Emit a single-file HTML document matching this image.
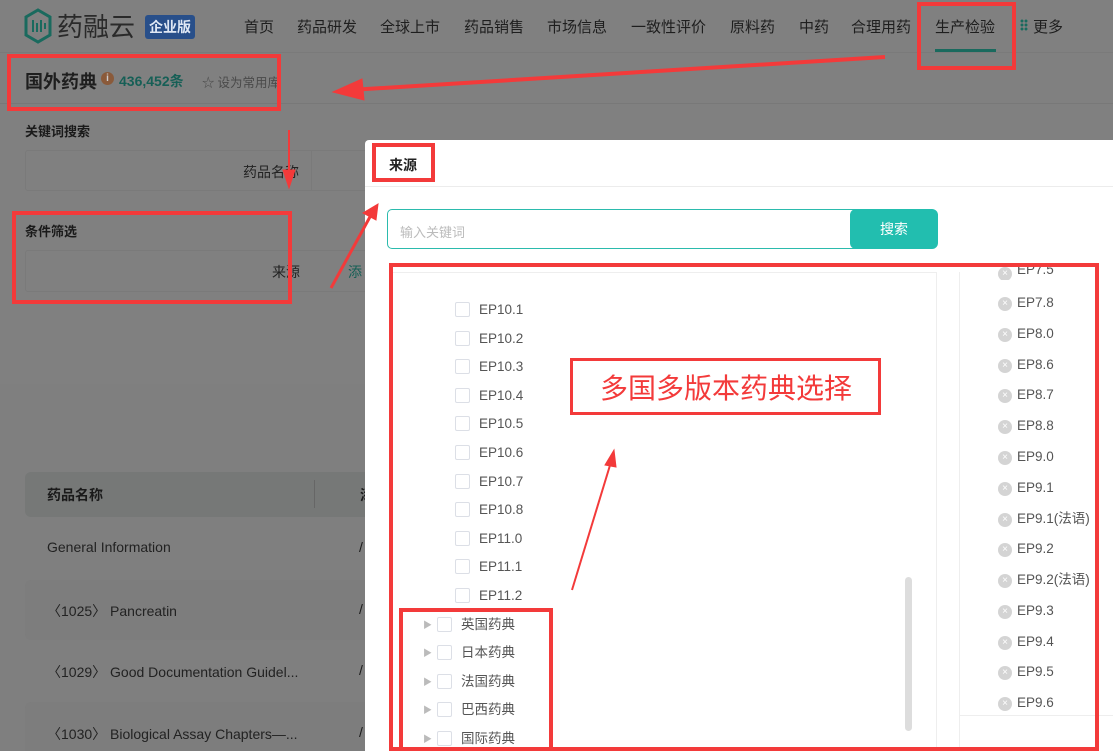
<!DOCTYPE html>
<html style="overflow:hidden;width:1113px;height:751px"><head><meta charset="utf-8"><style>
*{margin:0;padding:0;box-sizing:border-box}
body{width:1113px;height:751px;overflow:hidden;background:#808080;font-family:"Liberation Sans","Noto Sans CJK SC",sans-serif;position:relative;color:#1a1a1a}
.a{position:absolute;white-space:nowrap}
.nav{font-size:15px;color:#1e1e1e;top:16px}
.rb{position:absolute;border:4px solid #f33a3a}
.cb{position:absolute;width:15px;height:15px;border:1px solid #dcdfe6;border-radius:2px;background:#fff}
.lt{position:absolute;font-size:13.5px;color:#555;line-height:16px;white-space:nowrap}
.x{position:absolute;width:14px;height:14px;border-radius:50%;background:#d4d4d4;color:#fff;font-size:10px;line-height:14px;text-align:center}
</style></head><body>
<div class="a" style="left:0;top:0;width:1113px;height:53px;border-bottom:1px solid #7a7a7a"></div>
<svg class="a" style="left:23px;top:8px" width="30" height="36" viewBox="0 0 30 36"><path d="M15 2 L27 9 L27 27 L15 34 L3 27 L3 9 Z" fill="none" stroke="#1a6a5e" stroke-width="3"/><path d="M10 12v12M14 15v9M18 12v12M22 15v6" stroke="#1a6a5e" stroke-width="2"/></svg>
<div class="a" style="left:57px;top:7px;font-size:26px;color:#2a2a2a">药融云</div>
<div class="a" style="left:145px;top:15px;background:#284f8a;color:#dfe8f5;font-size:14px;font-weight:bold;padding:2px 4px;border-radius:3px">企业版</div>
<div class="a nav" style="left:244px">首页</div>
<div class="a nav" style="left:297px">药品研发</div>
<div class="a nav" style="left:380px">全球上市</div>
<div class="a nav" style="left:464px">药品销售</div>
<div class="a nav" style="left:547px">市场信息</div>
<div class="a nav" style="left:631px">一致性评价</div>
<div class="a nav" style="left:730px">原料药</div>
<div class="a nav" style="left:799px">中药</div>
<div class="a nav" style="left:851px">合理用药</div>
<div class="a nav" style="left:935px">生产检验</div>
<div class="a" style="left:935px;top:49px;width:61px;height:3px;background:#1a6a5e"></div>
<div class="a" style="left:1020px;top:19px;width:8px;height:12px;background:radial-gradient(circle,#1a6a5e 1.3px,transparent 1.6px) 0 0/4px 4px"></div>
<div class="a nav" style="left:1033px">更多</div>
<div class="a" style="left:0;top:54px;width:1113px;height:50px;border-bottom:1px solid #787878"></div>
<div class="a" style="left:25px;top:68px;font-size:18px;font-weight:bold;color:#1e1e1e">国外药典</div>
<div class="a" style="left:101px;top:72px;width:13px;height:13px;border-radius:50%;background:#8a5a3a;color:#ccc;font-size:10px;text-align:center;line-height:13px;font-weight:bold">i</div>
<div class="a" style="left:119px;top:71px;font-size:14px;font-weight:bold;color:#165f56">436,452条</div>
<div class="a" style="left:202px;top:72px;font-size:12.5px;color:#4a4a4a">☆<span style="margin-left:3px">设为常用库</span></div>
<div class="a" style="left:25px;top:121px;font-size:13px;font-weight:bold">关键词搜索</div>
<div class="a" style="left:25px;top:150px;width:345px;height:41px;border:1px solid #7a7a7a;border-radius:3px"></div>
<div class="a" style="left:311px;top:150px;width:1px;height:41px;background:#7a7a7a"></div>
<div class="a" style="left:243px;top:162px;font-size:14px;color:#222">药品名称</div>
<div class="a" style="left:25px;top:221px;font-size:13px;font-weight:bold">条件筛选</div>
<div class="a" style="left:25px;top:250px;width:345px;height:42px;border:1px solid #7a7a7a;border-radius:3px"></div>
<div class="a" style="left:272px;top:262px;font-size:14px;color:#222">来源</div>
<div class="a" style="left:348px;top:262px;font-size:14px;color:#165f56">添</div>
<div class="a" style="left:0;top:384px;width:365px;height:367px;background:#7f7f7f"></div>
<div class="a" style="left:25px;top:472px;width:345px;height:45px;background:#767877;border-radius:6px 0 0 6px"></div>
<div class="a" style="left:47px;top:485px;font-size:14px;font-weight:bold">药品名称</div>
<div class="a" style="left:314px;top:480px;width:1px;height:28px;background:#666"></div>
<div class="a" style="left:360px;top:485px;font-size:14px;font-weight:bold">添</div>
<div class="a" style="left:25px;top:580px;width:345px;height:60px;background:#7d7d7d;border-radius:6px"></div>
<div class="a" style="left:25px;top:702px;width:345px;height:60px;background:#7d7d7d;border-radius:6px"></div>
<div class="a" style="left:47px;top:539px;font-size:14px;color:#222">General Information</div>
<div class="a" style="left:47px;top:601px;font-size:14px;color:#222">〈1025〉 Pancreatin</div>
<div class="a" style="left:47px;top:662px;font-size:14px;color:#222">〈1029〉 Good Documentation Guidel...</div>
<div class="a" style="left:47px;top:724px;font-size:14px;color:#222">〈1030〉 Biological Assay Chapters—...</div>
<div class="a" style="left:359px;top:539px;font-size:14px">/</div><div class="a" style="left:359px;top:601px;font-size:14px">/</div><div class="a" style="left:359px;top:662px;font-size:14px">/</div><div class="a" style="left:359px;top:724px;font-size:14px">/</div>
<div class="a" style="left:365px;top:140px;width:748px;height:611px;background:#fff;border-radius:4px 0 0 0"></div>
<div class="a" style="left:365px;top:186px;width:748px;height:1px;background:#ececec"></div>
<div class="a" style="left:389px;top:155px;font-size:14px;font-weight:bold;color:#222">来源</div>
<div class="a" style="left:387px;top:209px;width:470px;height:40px;border:1px solid #2bbbad;border-radius:5px 0 0 5px"></div>
<div class="a" style="left:400px;top:222px;font-size:13px;color:#bbb">输入关键词</div>
<div class="a" style="left:850px;top:209px;width:88px;height:40px;background:#22beaf;border-radius:6px;color:#fff;font-size:14px;text-align:center;line-height:40px">搜索</div>
<div class="a" style="left:391px;top:272px;width:546px;height:479px;border:1px solid #eee;border-bottom:none"></div>
<div class="a" style="left:959px;top:272px;width:154px;height:479px;border-left:1px solid #eee"></div>
<div class="a" style="left:959px;top:715px;width:154px;height:1px;background:#eee"></div>
<div class="a" style="left:905px;top:577px;width:7px;height:154px;background:#ddd;border-radius:4px"></div>
<div class="cb" style="left:455px;top:302px"></div><div class="lt" style="left:479px;top:302px">EP10.1</div>
<div class="cb" style="left:455px;top:331px"></div><div class="lt" style="left:479px;top:331px">EP10.2</div>
<div class="cb" style="left:455px;top:359px"></div><div class="lt" style="left:479px;top:359px">EP10.3</div>
<div class="cb" style="left:455px;top:388px"></div><div class="lt" style="left:479px;top:388px">EP10.4</div>
<div class="cb" style="left:455px;top:416px"></div><div class="lt" style="left:479px;top:416px">EP10.5</div>
<div class="cb" style="left:455px;top:445px"></div><div class="lt" style="left:479px;top:445px">EP10.6</div>
<div class="cb" style="left:455px;top:474px"></div><div class="lt" style="left:479px;top:474px">EP10.7</div>
<div class="cb" style="left:455px;top:502px"></div><div class="lt" style="left:479px;top:502px">EP10.8</div>
<div class="cb" style="left:455px;top:531px"></div><div class="lt" style="left:479px;top:531px">EP11.0</div>
<div class="cb" style="left:455px;top:559px"></div><div class="lt" style="left:479px;top:559px">EP11.1</div>
<div class="cb" style="left:455px;top:588px"></div><div class="lt" style="left:479px;top:588px">EP11.2</div>
<div class="lt" style="left:423px;top:617px;font-size:9px;color:#bbb">▶</div><div class="cb" style="left:437px;top:617px"></div><div class="lt" style="left:461px;top:617px">英国药典</div>
<div class="lt" style="left:423px;top:645px;font-size:9px;color:#bbb">▶</div><div class="cb" style="left:437px;top:645px"></div><div class="lt" style="left:461px;top:645px">日本药典</div>
<div class="lt" style="left:423px;top:674px;font-size:9px;color:#bbb">▶</div><div class="cb" style="left:437px;top:674px"></div><div class="lt" style="left:461px;top:674px">法国药典</div>
<div class="lt" style="left:423px;top:702px;font-size:9px;color:#bbb">▶</div><div class="cb" style="left:437px;top:702px"></div><div class="lt" style="left:461px;top:702px">巴西药典</div>
<div class="lt" style="left:423px;top:731px;font-size:9px;color:#bbb">▶</div><div class="cb" style="left:437px;top:731px"></div><div class="lt" style="left:461px;top:731px">国际药典</div>
<div class="a" style="left:960px;top:266px;width:140px;height:14px;overflow:hidden"><div class="x" style="left:38px;top:1px">×</div><div class="lt" style="left:57px;top:-4px">EP7.5</div></div>
<div class="x" style="left:998px;top:297px">×</div><div class="lt" style="left:1017px;top:295px">EP7.8</div>
<div class="x" style="left:998px;top:328px">×</div><div class="lt" style="left:1017px;top:326px">EP8.0</div>
<div class="x" style="left:998px;top:359px">×</div><div class="lt" style="left:1017px;top:357px">EP8.6</div>
<div class="x" style="left:998px;top:389px">×</div><div class="lt" style="left:1017px;top:387px">EP8.7</div>
<div class="x" style="left:998px;top:420px">×</div><div class="lt" style="left:1017px;top:418px">EP8.8</div>
<div class="x" style="left:998px;top:451px">×</div><div class="lt" style="left:1017px;top:449px">EP9.0</div>
<div class="x" style="left:998px;top:482px">×</div><div class="lt" style="left:1017px;top:480px">EP9.1</div>
<div class="x" style="left:998px;top:513px">×</div><div class="lt" style="left:1017px;top:511px">EP9.1(法语)</div>
<div class="x" style="left:998px;top:543px">×</div><div class="lt" style="left:1017px;top:541px">EP9.2</div>
<div class="x" style="left:998px;top:574px">×</div><div class="lt" style="left:1017px;top:572px">EP9.2(法语)</div>
<div class="x" style="left:998px;top:605px">×</div><div class="lt" style="left:1017px;top:603px">EP9.3</div>
<div class="x" style="left:998px;top:636px">×</div><div class="lt" style="left:1017px;top:634px">EP9.4</div>
<div class="x" style="left:998px;top:666px">×</div><div class="lt" style="left:1017px;top:664px">EP9.5</div>
<div class="x" style="left:998px;top:697px">×</div><div class="lt" style="left:1017px;top:695px">EP9.6</div>
<div class="rb" style="left:917px;top:2px;width:99px;height:68px"></div>
<div class="rb" style="left:7px;top:54px;width:274px;height:57px"></div>
<div class="rb" style="left:12px;top:211px;width:280px;height:93px"></div>
<div class="rb" style="left:372px;top:143px;width:63px;height:39px"></div>
<div class="rb" style="left:389px;top:263px;width:710px;height:488px"></div>
<div class="rb" style="left:399px;top:608px;width:154px;height:143px"></div>
<div class="rb" style="left:570px;top:358px;width:311px;height:57px;border-width:3px"></div>
<div class="a" style="left:600px;top:367px;font-size:28px;color:#f33a3a">多国多版本药典选择</div>
<svg class="a" style="left:0;top:0" width="1113" height="751">
<g fill="#f33a3a" stroke="#f33a3a">
<path d="M885 57 L350 90" stroke-width="4"/><path d="M333 92 L362 79 L364 100 Z"/>
<path d="M289 130 L289 175" stroke-width="2"/><path d="M289 188 L283 170 L295 170 Z"/>
<path d="M331 288 L371 215" stroke-width="3"/><path d="M378 204 L363 213 L376 220 Z"/>
<path d="M572 590 L611 462" stroke-width="2"/><path d="M614 450 L605 465 L616 467 Z"/>
</g></svg>
</body></html>
